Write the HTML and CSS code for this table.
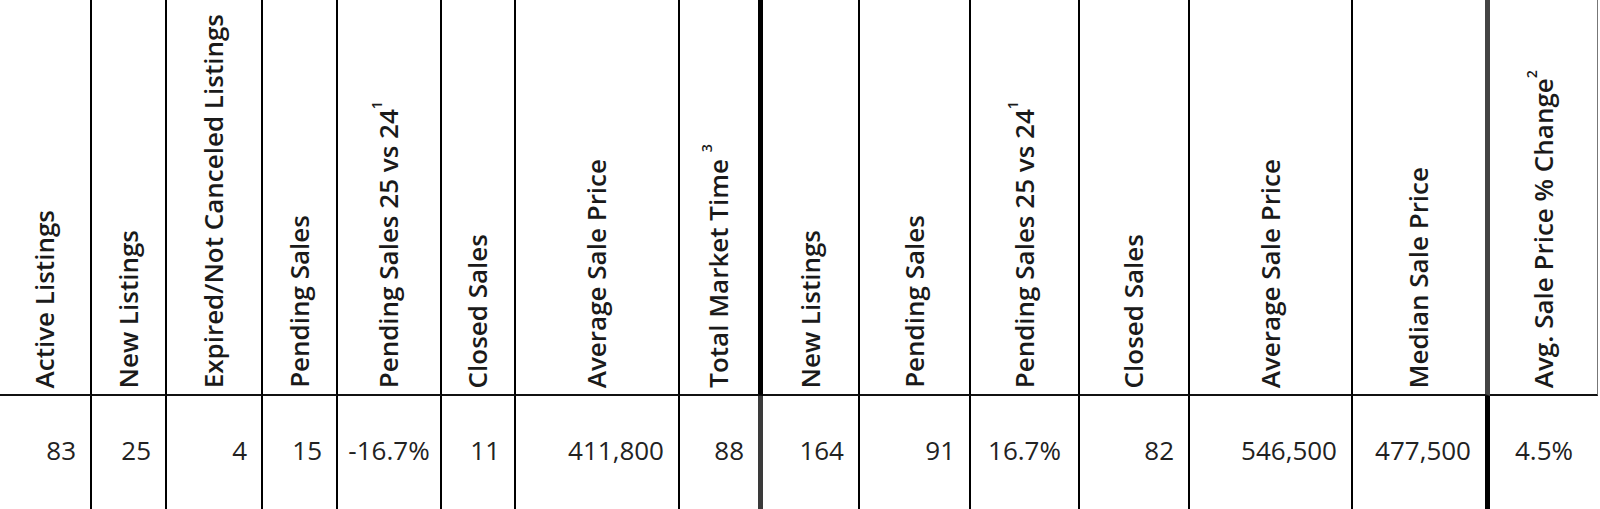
FILE: index.html
```html
<!DOCTYPE html>
<html lang="en">
<head>
<meta charset="utf-8">
<title>Market Statistics</title>
<link rel="stylesheet" href="styles.css">
</head>
<body>
<table class="stats">
  <colgroup>
    <col class="w1"><col class="w2"><col class="w3"><col class="w4"><col class="w5">
    <col class="w6"><col class="w7"><col class="w8"><col class="w9"><col class="w10">
    <col class="w11"><col class="w12"><col class="w13"><col class="w14"><col class="w15">
  </colgroup>
  <thead>
    <tr>
      <th><span class="vh">Active Listings</span></th>
      <th><span class="vh">New Listings</span></th>
      <th><span class="vh">Expired/Not Canceled Listings</span></th>
      <th><span class="vh">Pending Sales</span></th>
      <th><span class="vh">Pending Sales 25 vs 24<sup>1</sup></span></th>
      <th><span class="vh">Closed Sales</span></th>
      <th><span class="vh">Average Sale Price</span></th>
      <th class="sep-a"><span class="vh">Total Market Time <sup>3</sup></span></th>
      <th><span class="vh">New Listings</span></th>
      <th><span class="vh">Pending Sales</span></th>
      <th><span class="vh">Pending Sales 25 vs 24<sup>1</sup></span></th>
      <th><span class="vh">Closed Sales</span></th>
      <th><span class="vh">Average Sale Price</span></th>
      <th class="sep-b"><span class="vh">Median Sale Price</span></th>
      <th class="last"><span class="vh">Avg. Sale Price % Change<sup>2</sup></span></th>
    </tr>
  </thead>
  <tbody>
    <tr>
      <td>83</td>
      <td>25</td>
      <td>4</td>
      <td>15</td>
      <td class="pct">-16.7%</td>
      <td>11</td>
      <td>411,800</td>
      <td class="sep-a">88</td>
      <td>164</td>
      <td>91</td>
      <td class="pct">16.7%</td>
      <td>82</td>
      <td>546,500</td>
      <td class="sep-b">477,500</td>
      <td class="pct last">4.5%</td>
    </tr>
  </tbody>
</table>
</body>
</html>
```
FILE: styles.css
```css
html, body {
  margin: 0;
  padding: 0;
  background: #ffffff;
  overflow: hidden;
}

.stats {
  border-collapse: separate;
  border-spacing: 0;
  table-layout: fixed;
  width: 1598px;
  font-family: "Open Sans", "DejaVu Sans", sans-serif;
  color: #222222;
}

.w1 { width: 92px; }
.w2 { width: 75px; }
.w3 { width: 96px; }
.w4 { width: 75px; }
.w5 { width: 104px; }
.w6 { width: 74px; }
.w7 { width: 164px; }
.w8 { width: 83px; }
.w9 { width: 97px; }
.w10 { width: 111px; }
.w11 { width: 109px; }
.w12 { width: 110px; }
.w13 { width: 163px; }
.w14 { width: 137px; }
.w15 { width: 108px; }

.stats th,
.stats td {
  box-sizing: border-box;
  border-right: 2px solid #000000;
}

.stats th {
  height: 396px;
  padding: 0 0 6px;
  border-bottom: 2px solid #111111;
  vertical-align: bottom;
  text-align: center;
  font-weight: 600;
  font-size: 26px;
  line-height: 1;
  color: #1a1a1a;
}

.vh {
  display: inline-block;
  vertical-align: bottom;
  writing-mode: vertical-rl;
  transform: rotate(180deg);
  white-space: nowrap;
  line-height: 1.3;
}

.vh sup {
  font-size: 0.55em;
  line-height: 0;
  vertical-align: 0.8em;
}

.stats td {
  height: 114px;
  padding: 0 14px 6px 0;
  text-align: right;
  vertical-align: middle;
  font-size: 26px;
  font-weight: 400;
}

.stats td.pct {
  padding: 0 0 6px;
  text-align: center;
}

.stats th.sep-a {
  border-right: 5px solid #000000;
}

.stats td.sep-a {
  border-right: 5px solid #3a3a3a;
}

.stats th.sep-b {
  border-right: 5px solid #444444;
}

.stats td.sep-b {
  border-right: 5px solid #000000;
}

.stats th.last {
  border-right: 1px solid #777777;
}

.stats td.last {
  border-right: none;
}
```
